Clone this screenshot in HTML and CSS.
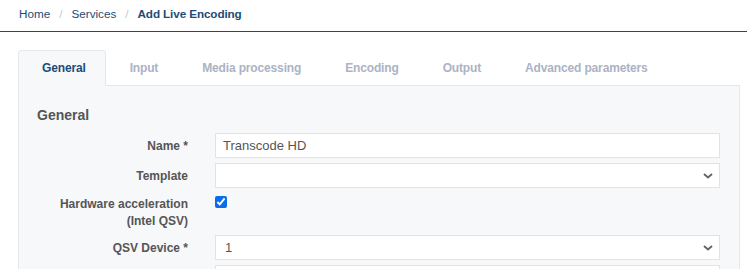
FILE: index.html
```html
<!DOCTYPE html>
<html>
<head>
    <title>Add Live Encoding</title>
    <link rel="stylesheet" href="styles.css">
</head>
<body>
    <div class="breadcrumb">
        <a href="#">Home</a>
        <span class="sep">/</span>
        <a href="#">Services</a>
        <span class="sep">/</span>
        <span class="current">Add Live Encoding</span>
    </div>

    <div class="content">
        <ul class="tabs">
            <li class="tab active">General</li>
            <li class="tab">Input</li>
            <li class="tab">Media processing</li>
            <li class="tab">Encoding</li>
            <li class="tab">Output</li>
            <li class="tab">Advanced parameters</li>
        </ul>

        <div class="panel">
            <h2>General</h2>

            <div class="row">
                <label class="label">Name *</label>
                <div class="field"><input type="text" class="input" value="Transcode HD"></div>
            </div>
            <div class="row">
                <label class="label">Template</label>
                <div class="field">
                    <div class="select">
                        <span></span>
                        <svg width="10" height="6" viewBox="0 0 10 6"><path d="M1 1 L5 4.5 L9 1" fill="none" stroke="#666" stroke-width="2"/></svg>
                    </div>
                </div>
            </div>
            <div class="row top">
                <label class="label two">Hardware acceleration<br>(Intel QSV)</label>
                <div class="field"><input type="checkbox" class="check" checked></div>
            </div>
            <div class="row">
                <label class="label">QSV Device *</label>
                <div class="field">
                    <div class="select">
                        <span>1</span>
                        <svg width="10" height="6" viewBox="0 0 10 6"><path d="M1 1 L5 4.5 L9 1" fill="none" stroke="#666" stroke-width="2"/></svg>
                    </div>
                </div>
            </div>
            <div class="row">
                <label class="label"></label>
                <div class="field"><input type="text" class="input" value=""></div>
            </div>
        </div>
    </div>
</body>
</html>
```

FILE: styles.css
```css
body {
    font-family: "Liberation Sans", Arial, sans-serif;
    margin: 0;
    background-color: #ffffff;
    color: #555;
    overflow: hidden;
}
.breadcrumb {
    height: 26px;
    padding: 0 19px 5px 19px;
    display: flex;
    align-items: center;
    font-size: 11.7px;
    border-bottom: 1px solid #1d4b78;
    color: #1d4b78;
}
.breadcrumb a {
    color: #1d4b78;
    text-decoration: none;
}
.breadcrumb .sep {
    color: #c4c8cf;
    margin: 0 9px;
}
.breadcrumb .current {
    font-weight: bold;
    letter-spacing: -0.1px;
}
.content {
    padding: 18px 7px 0 18px;
}
.tabs {
    list-style: none;
    margin: 0;
    padding: 0;
    display: flex;
    border-bottom: 1px solid #e4e7eb;
}
.tab {
    height: 34px;
    line-height: 34px;
    padding: 0 19px 0 23px;
    font-size: 12px;
    font-weight: bold;
    letter-spacing: -0.15px;
    color: #abb3c4;
    border: 1px solid transparent;
    border-bottom: none;
    margin-bottom: -1px;
}
.tab.active {
    color: #1d4b78;
    background-color: #f7f8fa;
    border-color: #e4e7eb;
    border-radius: 4px 4px 0 0;
    height: 35px;
}
.panel {
    background-color: #f7f8fa;
    border: 1px solid #e4e7eb;
    border-top: none;
    padding: 19px 19px 10px 18px;
    height: 200px;
}
h2 {
    margin: 0 0 8px 0;
    font-size: 14px;
    line-height: 20px;
    color: #555;
}
.row {
    display: flex;
    align-items: center;
    margin-bottom: 5px;
}
.row.top {
    align-items: flex-start;
}
.label {
    width: 151px;
    flex: none;
    text-align: right;
    font-size: 12px;
    font-weight: bold;
    color: #555;
    margin-right: 27px;
}
.label.two {
    line-height: 17px;
    padding-top: 3px;
}
.field {
    flex: 1;
}
.input, .select {
    box-sizing: border-box;
    width: 100%;
    height: 25px;
    border: 1px solid #e1e3e6;
    background-color: #ffffff;
    font-family: "Liberation Sans", Arial, sans-serif;
    font-size: 13px;
    color: #555;
    padding: 0 7px;
    outline: none;
}
.select {
    display: flex;
    align-items: center;
    justify-content: space-between;
    padding: 0 6px 0 9px;
}
.check {
    margin: 3px 0 0 0;
    width: 12px;
    height: 12px;
    accent-color: #0a6ce8;
}
```
